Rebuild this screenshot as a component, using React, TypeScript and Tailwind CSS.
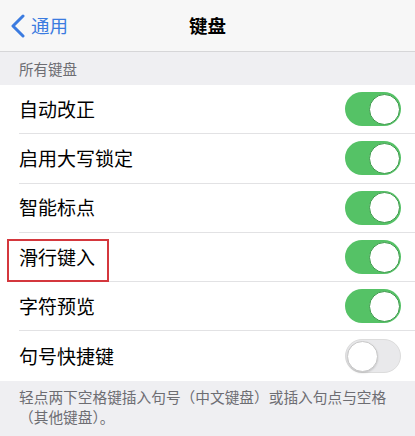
const ROWS = [
  { label: '自动改正', on: true },
  { label: '启用大写锁定', on: true },
  { label: '智能标点', on: true },
  { label: '滑行键入', on: true, marked: true },
  { label: '字符预览', on: true },
  { label: '句号快捷键', on: false },
]

function Toggle({ on }: { on: boolean }) {
  return (
    <div
      className={
        on
          ? 'relative w-[56px] h-[34px] rounded-full bg-[#55c266]'
          : 'relative w-[56px] h-[34px] rounded-full bg-[#e9e9eb] border border-[#dcdcdc]'
      }
    >
      <div
        className={
          on
            ? 'absolute top-[1.5px] right-[1.5px] w-[31px] h-[31px] rounded-full bg-white border border-[#3f9a4d]'
            : 'absolute top-[0.5px] left-[0.5px] w-[31px] h-[31px] rounded-full bg-white border border-[#c8c8c8] shadow-[0_1px_2px_rgba(0,0,0,0.15)]'
        }
      />
    </div>
  )
}

export default function App() {
  return (
    <div
      className="w-[415px] h-[436px] overflow-hidden bg-[#efeff2]"
      style={{ fontFamily: '"Noto Sans CJK SC", "Noto Sans", sans-serif' }}
    >
      {/* Nav bar */}
      <div className="relative h-[52px] bg-[#f7f7f7] border-b border-[#d6d6d8] flex items-center justify-center">
        <div className="absolute left-[10px] top-0 h-full flex items-center gap-[5px] text-[#3b7be0]">
          <svg width="16" height="24" viewBox="0 0 16 24">
            <path d="M13 2 L3 12 L13 22" fill="none" stroke="currentColor" strokeWidth="3" strokeLinecap="round" strokeLinejoin="round" />
          </svg>
          <span className="text-[18.5px] leading-none">通用</span>
        </div>
        <span className="text-[18.5px] font-bold text-black">键盘</span>
      </div>

      {/* Section header */}
      <div className="h-[33px] px-[19px] flex items-center text-[14.5px] text-[#6d6d72]">所有键盘</div>

      {/* Rows */}
      <div className="bg-white">
        {ROWS.map((row, i) => (
          <div key={row.label} className="relative pl-[19px]">
            <div
              className={
                i < ROWS.length - 1
                  ? 'h-[49.3px] flex items-center justify-between pr-[14px] border-b border-[#e2e2e4]'
                  : 'h-[49.3px] flex items-center justify-between pr-[14px]'
              }
            >
              <span className="text-[19px] text-black">{row.label}</span>
              <Toggle on={row.on} />
            </div>
            {row.marked && (
              <div className="absolute left-[7px] top-[6px] w-[102px] h-[43px] border-2 border-[#d4373d]" />
            )}
          </div>
        ))}
      </div>

      {/* Footer */}
      <div className="px-[19px] pt-[6px] text-[14.7px] leading-[20px] text-[#6d6d72]">
        轻点两下空格键插入句号（中文键盘）或插入句点与空格（其他键盘）。
      </div>
    </div>
  )
}
